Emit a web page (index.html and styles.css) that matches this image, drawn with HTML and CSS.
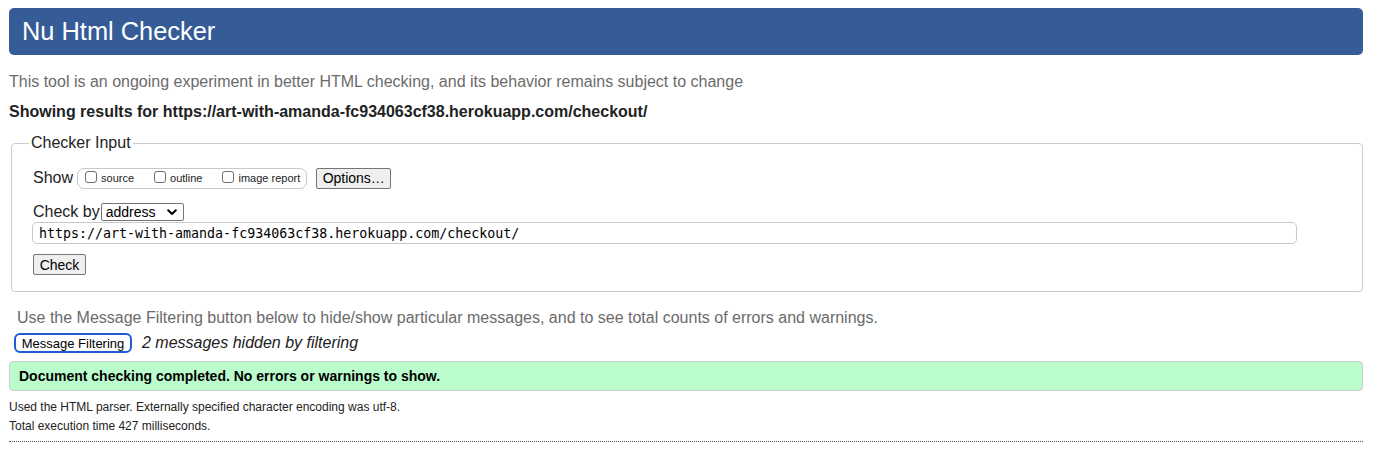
FILE: index.html
```html
<!DOCTYPE html>
<html lang="en">
<head>
<meta charset="utf-8">
<title>Showing results for https://art-with-amanda-fc934063cf38.herokuapp.com/checkout/ - Nu Html Checker</title>
<link rel="stylesheet" href="styles.css">
</head>
<body>
<h1 class="title">Nu Html Checker</h1>
<p class="intro">This tool is an ongoing experiment in better HTML checking, and its behavior remains subject to change</p>
<p class="showing">Showing results for https://art-with-amanda-fc934063cf38.herokuapp.com/checkout/</p>
<fieldset class="input-box">
  <legend class="legend">Checker Input</legend>
  <div class="row show-row">
    <span class="label">Show</span>
    <span class="show-group">
      <label class="opt"><input type="checkbox" class="cb"><span>source</span></label>
      <label class="opt"><input type="checkbox" class="cb"><span>outline</span></label>
      <label class="opt"><input type="checkbox" class="cb"><span>image report</span></label>
    </span>
    <button class="btn options-btn" type="button">Options…</button>
  </div>
  <div class="row checkby-row">
    <span class="label">Check by</span>
    <span class="select"><span class="select-text">address</span><svg class="chev" width="10" height="7" viewBox="0 0 10 7"><path d="M1.2 1.3 L5 5 L8.8 1.3" fill="none" stroke="#000" stroke-width="2" stroke-linecap="round" stroke-linejoin="round"/></svg></span>
  </div>
  <div class="row url-row">
    <input class="url" type="text" value="https://art-with-amanda-fc934063cf38.herokuapp.com/checkout/">
  </div>
  <div class="row check-row">
    <button class="btn check-btn" type="button">Check</button>
  </div>
</fieldset>
<p class="filter-note">Use the Message Filtering button below to hide/show particular messages, and to see total counts of errors and warnings.</p>
<div class="filter-row">
  <button class="filter-btn" type="button">Message Filtering</button>
  <span class="hidden-count">2 messages hidden by filtering</span>
</div>
<p class="success">Document checking completed. No errors or warnings to show.</p>
<div class="details">
  <p class="detail">Used the HTML parser. Externally specified character encoding was utf-8.</p>
  <p class="detail">Total execution time 427 milliseconds.</p>
</div>
</body>
</html>
```
FILE: styles.css
```css
html, body {
  background: #fff;
}
body {
  margin: 8px 15px 0 9px;
  font-family: "Liberation Sans", Arial, sans-serif;
  color: #222;
  font-size: 16px;
}
.title {
  margin: 0;
  height: 47px;
  line-height: 47px;
  padding-left: 13px;
  background: #355c97;
  color: #fff;
  font-size: 25.4px;
  font-weight: normal;
  border-radius: 5px;
}
.intro {
  margin: 18px 0 0;
  line-height: 18px;
  color: #6b6b6b;
}
.showing {
  margin: 12px 0 0;
  line-height: 18px;
  font-weight: bold;
  color: #222;
}
.input-box {
  margin: 13px 0 0 2px;
  padding: 5px 21px 16px 21px;
  border: 1px solid #ccc;
  border-radius: 4px;
}
.legend {
  padding: 0 2px;
  margin-left: -4px;
  line-height: 18px;
  color: #222;
}
.row {
  display: flex;
  align-items: center;
}
.label {
  line-height: 18px;
}
.show-row {
  height: 22px;
  margin-top: 10px;
}
.show-group {
  display: flex;
  align-items: center;
  height: 19px;
  margin-left: 4px;
  padding: 0 6px 0 7px;
  border: 1px solid #c8c8c8;
  border-radius: 7px;
  font-size: 11px;
}
.opt {
  display: flex;
  align-items: center;
  margin-right: 20px;
  color: #222;
}
.opt:last-child {
  margin-right: 0;
}
.cb {
  appearance: none;
  -webkit-appearance: none;
  width: 12px;
  height: 12px;
  margin: 0 4px 2px 0;
  border: 1px solid #6e6e6e;
  border-radius: 3px;
  background: #fff;
}
.btn {
  font-family: "Liberation Sans", Arial, sans-serif;
  font-size: 14px;
  color: #000;
  background: #efefef;
  border: 1px solid #767676;
  border-radius: 2px;
  padding: 0;
  height: 21px;
}
.options-btn {
  width: 75px;
  margin-left: 9px;
}
.checkby-row {
  margin-top: 14px;
  height: 18px;
}
.select {
  display: flex;
  align-items: center;
  justify-content: space-between;
  width: 83px;
  height: 18px;
  box-sizing: border-box;
  margin-left: 1px;
  padding: 0 6px 0 4px;
  border: 1px solid #767676;
  border-radius: 2px;
  font-size: 14px;
  color: #000;
}
.chev {
  display: block;
}
.url-row {
  margin-top: 1px;
}
.url {
  box-sizing: border-box;
  width: 1265px;
  height: 22px;
  margin: 0 0 0 -1px;
  padding: 0 6px;
  border: 1px solid #c8c8c8;
  border-radius: 5px;
  font-family: "DejaVu Sans Mono", "Liberation Mono", monospace;
  font-size: 13.3px;
  color: #000;
  outline: none;
}
.check-row {
  margin-top: 10px;
}
.check-btn {
  width: 53px;
}
.filter-note {
  margin: 17px 0 0 8px;
  line-height: 18px;
  color: #6b6b6b;
}
.filter-row {
  display: flex;
  align-items: center;
  margin-top: 6px;
  height: 20px;
}
.filter-btn {
  box-sizing: border-box;
  height: 20px;
  width: 118px;
  margin-left: 5px;
  padding: 0;
  border: 2px solid #1f5bd1;
  border-radius: 6px;
  background: #fff;
  font-family: "Liberation Sans", Arial, sans-serif;
  font-size: 13px;
  color: #000;
}
.hidden-count {
  margin-left: 10px;
  font-style: italic;
  color: #222;
}
.success {
  margin: 8px 0 0;
  box-sizing: border-box;
  height: 30px;
  line-height: 28px;
  padding-left: 9px;
  background: #bbfccc;
  border: 1px solid #ccc;
  border-radius: 4px;
  font-size: 14px;
  font-weight: bold;
  color: #000;
}
.details {
  padding-top: 8px;
  padding-bottom: 4px;
  border-bottom: 1px dotted #555;
}
.detail {
  margin: 0 0 3px;
  font-size: 12px;
  line-height: 16px;
  color: #222;
}
```
